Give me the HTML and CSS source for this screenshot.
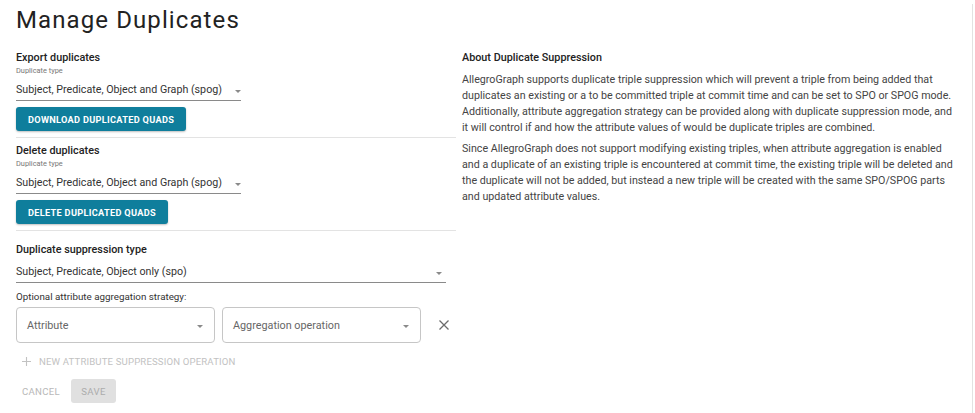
FILE: index.html
```html
<!DOCTYPE html>
<html>
<head>
<meta charset="utf-8">
<link rel="stylesheet" href="styles.css">
</head>
<body>
<div class="page">
  <h1 class="title">Manage Duplicates</h1>
  <div class="columns">
    <div class="left">
      <div class="heading">Export duplicates</div>
      <div class="label">Duplicate type</div>
      <div class="select short">
        <span class="value">Subject, Predicate, Object and Graph (spog)</span>
        <span class="caret"></span>
      </div>
      <button class="btn">DOWNLOAD DUPLICATED QUADS</button>
      <div class="divider"></div>

      <div class="heading">Delete duplicates</div>
      <div class="label">Duplicate type</div>
      <div class="select short">
        <span class="value">Subject, Predicate, Object and Graph (spog)</span>
        <span class="caret"></span>
      </div>
      <button class="btn">DELETE DUPLICATED QUADS</button>
      <div class="divider"></div>

      <div class="heading h-supp">Duplicate suppression type</div>
      <div class="select wide">
        <span class="value">Subject, Predicate, Object only (spo)</span>
        <span class="caret"></span>
      </div>
      <div class="optional">Optional attribute aggregation strategy:</div>
      <div class="agg-row">
        <div class="outlined">
          <span>Attribute</span>
          <span class="caret"></span>
        </div>
        <div class="outlined">
          <span>Aggregation operation</span>
          <span class="caret"></span>
        </div>
        <svg class="close" width="12" height="12" viewBox="0 0 12 12">
          <path d="M1.5 1.5 L10.5 10.5 M10.5 1.5 L1.5 10.5" stroke="#6b6b6b" stroke-width="1.3" fill="none"/>
        </svg>
      </div>
      <div class="add-op">
        <svg class="plus" width="9" height="9" viewBox="0 0 9 9">
          <path d="M4.5 0 V9 M0 4.5 H9" stroke="#c2c2c2" stroke-width="1.1" fill="none"/>
        </svg>
        <span>NEW ATTRIBUTE SUPPRESSION OPERATION</span>
      </div>
      <div class="actions">
        <span class="cancel">CANCEL</span>
        <span class="save">SAVE</span>
      </div>
    </div>
    <div class="right">
      <div class="heading">About Duplicate Suppression</div>
      <p class="para">AllegroGraph supports duplicate triple suppression which will prevent a triple from being added that<br>duplicates an existing or a to be committed triple at commit time and can be set to SPO or SPOG mode.<br>Additionally, attribute aggregation strategy can be provided along with duplicate suppression mode, and<br>it will control if and how the attribute values of would be duplicate triples are combined.</p>
      <p class="para p2">Since AllegroGraph does not support modifying existing triples, when attribute aggregation is enabled<br>and a duplicate of an existing triple is encountered at commit time, the existing triple will be deleted and<br>the duplicate will not be added, but instead a new triple will be created with the same SPO/SPOG parts<br>and updated attribute values.</p>
    </div>
  </div>
</div>
</body>
</html>
```

FILE: styles.css
```css
html, body {
  margin: 0;
  padding: 0;
  background: #ffffff;
}

body {
  font-family: Roboto, "Liberation Sans", sans-serif;
  color: #333;
  width: 975px;
  height: 413px;
  overflow: hidden;
}

.page {
  width: 973px;
  height: 413px;
  box-sizing: border-box;
  border-right: 1px solid #e2e2e2;
  padding: 0 16px;
}

.title {
  margin: 4px 0 0;
  font-size: 24px;
  line-height: 32px;
  font-weight: 400;
  letter-spacing: 1.1px;
  color: #222;
}

.columns {
  display: flex;
  margin-top: 14px;
}

.left {
  width: 440px;
  flex: none;
}

.right {
  margin-left: 6px;
  width: 500px;
  white-space: nowrap;
}

.heading {
  font-size: 10.8px;
  line-height: 16px;
  font-weight: 500;
  color: #222;
}

.label {
  font-size: 7.4px;
  line-height: 10px;
  color: #777;
}

.select {
  display: flex;
  align-items: center;
  justify-content: space-between;
  font-size: 10.7px;
  line-height: 16px;
  color: #333;
  padding: 6px 0 2px;
  border-bottom: 1px solid #8a8a8a;
}

.value {
  white-space: nowrap;
}

.select.short {
  width: 225px;
}

.select.wide {
  width: 430px;
}

.select.wide .caret {
  margin-right: 4px;
}

.caret {
  width: 0;
  height: 0;
  border-left: 3.5px solid transparent;
  border-right: 3.5px solid transparent;
  border-top: 3.5px solid #8a8a8a;
  margin-top: 3px;
}

.btn {
  display: block;
  margin-top: 6px;
  height: 24px;
  padding: 0 12px;
  border: none;
  border-radius: 3px;
  background: #0f7e9c;
  color: #fff;
  font-family: Roboto, "Liberation Sans", sans-serif;
  font-size: 9.2px;
  font-weight: 700;
  letter-spacing: 0.3px;
  box-shadow: 0 1px 2px rgba(0, 0, 0, 0.25);
}

.divider {
  height: 1px;
  background: #e3e3e3;
  margin: 6px 0 5px;
}

.h-supp {
  margin-top: 11px;
}

.optional {
  margin-top: 7px;
  font-size: 9.8px;
  line-height: 14px;
  color: #333;
}

.agg-row {
  display: flex;
  align-items: center;
  margin-top: 3px;
}

.outlined {
  width: 199px;
  height: 36px;
  box-sizing: border-box;
  border: 1px solid #c6c6c6;
  border-radius: 4px;
  display: flex;
  align-items: center;
  justify-content: space-between;
  padding: 0 10px 0 10px;
  font-size: 10.8px;
  color: #666;
  margin-right: 7px;
}

.outlined .caret {
  margin-right: 1px;
}

.close {
  margin-left: 10px;
}

.add-op {
  display: flex;
  align-items: center;
  margin-top: 12px;
  margin-left: 6px;
  height: 12px;
  font-size: 9.6px;
  letter-spacing: 0.15px;
  color: #c2c2c2;
}

.plus {
  margin-right: 8px;
}

.actions {
  display: flex;
  align-items: center;
  margin-top: 12px;
  font-size: 9.6px;
  letter-spacing: 0.3px;
}

.cancel {
  color: #b8b8b8;
  margin-left: 6px;
  margin-right: 11px;
}

.save {
  background: #e0e0e0;
  color: #acacac;
  border-radius: 3px;
  width: 45px;
  height: 24px;
  display: flex;
  align-items: center;
  justify-content: center;
}

.para {
  margin: 6px 0 0;
  font-size: 10.7px;
  line-height: 16px;
  color: #444;
}

.para.p2 {
  margin-top: 5px;
}
```
